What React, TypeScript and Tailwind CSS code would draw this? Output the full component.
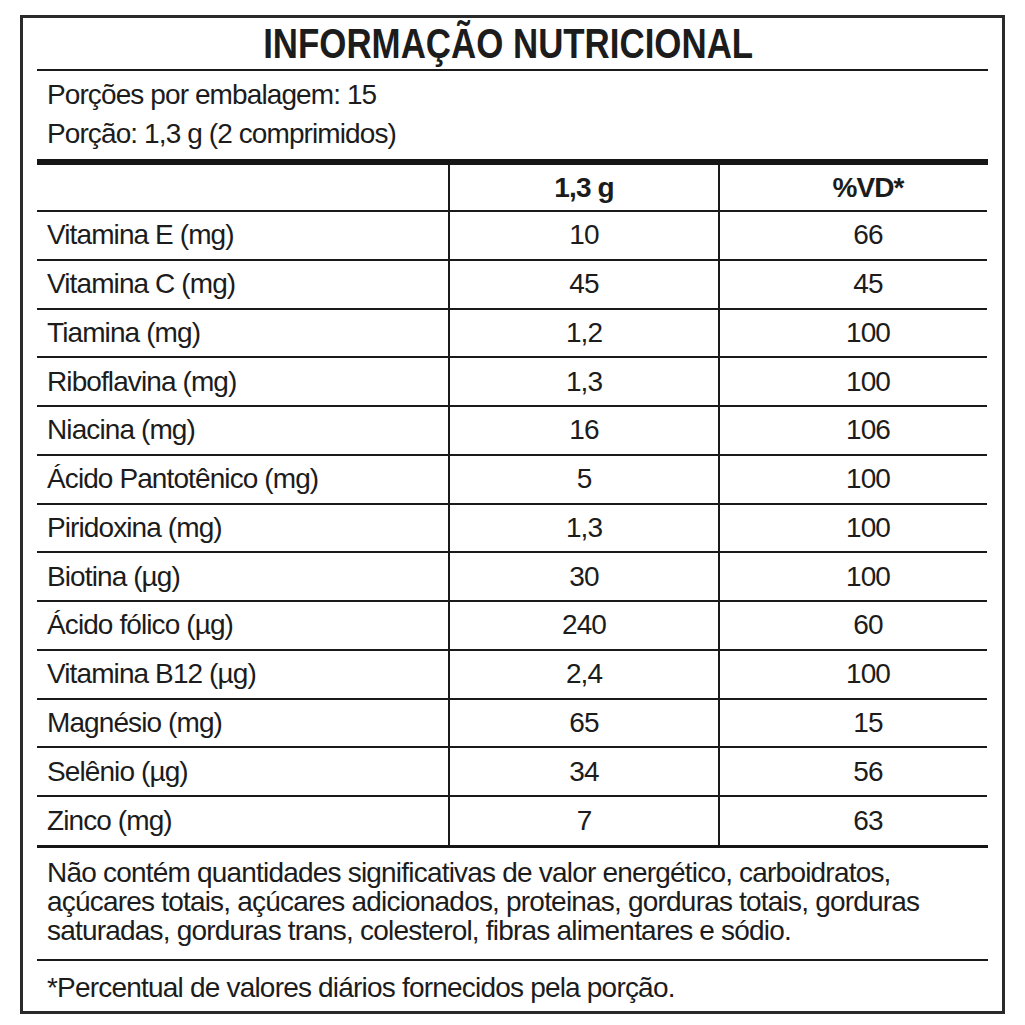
const rows: [string, string, string][] = [
  ['Vitamina E (mg)', '10', '66'],
  ['Vitamina C (mg)', '45', '45'],
  ['Tiamina (mg)', '1,2', '100'],
  ['Riboflavina (mg)', '1,3', '100'],
  ['Niacina (mg)', '16', '106'],
  ['Ácido Pantotênico (mg)', '5', '100'],
  ['Piridoxina (mg)', '1,3', '100'],
  ['Biotina (µg)', '30', '100'],
  ['Ácido fólico (µg)', '240', '60'],
  ['Vitamina B12 (µg)', '2,4', '100'],
  ['Magnésio (mg)', '65', '15'],
  ['Selênio (µg)', '34', '56'],
  ['Zinco (mg)', '7', '63'],
];

export default function App() {
  return (
    <div className="min-h-screen bg-white pl-[20px] pt-[15px] font-['Liberation_Sans',Arial,sans-serif] text-[#1c1c1c]">
      <div className="w-[985px] border-[3px] border-[#2a2a2a] px-[14px]">
        {/* Title */}
        <div className="h-[53px] pt-[5px] pr-[8px] text-center border-b-2 border-[#1a1a1a]">
          <span className="inline-block scale-x-[0.83] text-[42px] font-bold leading-[42px] whitespace-nowrap">
            INFORMAÇÃO NUTRICIONAL
          </span>
        </div>

        {/* Serving info */}
        <div className="pt-[4px] pb-[6px] pl-[10px] text-[28px] leading-[39px] tracking-[-0.9px] border-b-[6px] border-[#161616]">
          <p>Porções por embalagem: 15</p>
          <p>Porção: 1,3 g (2 comprimidos)</p>
        </div>

        {/* Table */}
        <div className="grid grid-cols-[411px_270px_269px] text-[28px] tracking-[-0.9px] border-b-[3px] border-[#161616]">
          <div className="h-[47px] border-b-2 border-[#1a1a1a]" />
          <div className="flex h-[47px] items-center justify-center border-b-2 border-l-2 border-[#1a1a1a] font-bold">
            1,3 g
          </div>
          <div className="flex h-[47px] items-center justify-center border-b-2 border-l-2 border-[#1a1a1a] pl-[29px] font-bold">
            %VD*
          </div>
          {rows.map(([name, amount, vd], i) => {
            const last = i === rows.length - 1;
            const cell = last ? 'h-[47.5px]' : 'h-[48.75px] border-b-2';
            return (
              <div key={name} className="contents">
                <div className={`flex items-center border-[#1a1a1a] pl-[10px] ${cell}`}>
                  {name}
                </div>
                <div className={`flex items-center justify-center border-l-2 border-[#1a1a1a] ${cell}`}>
                  {amount}
                </div>
                <div className={`flex items-center justify-center border-l-2 border-[#1a1a1a] pl-[29px] ${cell}`}>
                  {vd}
                </div>
              </div>
            );
          })}
        </div>

        {/* Notes */}
        <div className="pt-[10px] pb-[14px] pl-[10px] text-[28px] leading-[29px] tracking-[-0.8px] border-b-2 border-[#1a1a1a]">
          <p>Não contém quantidades significativas de valor energético, carboidratos,</p>
          <p>açúcares totais, açúcares adicionados, proteinas, gorduras totais, gorduras</p>
          <p>saturadas, gorduras trans, colesterol, fibras alimentares e sódio.</p>
        </div>
        <div className="pt-[12px] pb-[9px] pl-[10px] text-[28px] leading-[29px] tracking-[-0.8px]">
          <p>*Percentual de valores diários fornecidos pela porção.</p>
        </div>
      </div>
    </div>
  );
}
